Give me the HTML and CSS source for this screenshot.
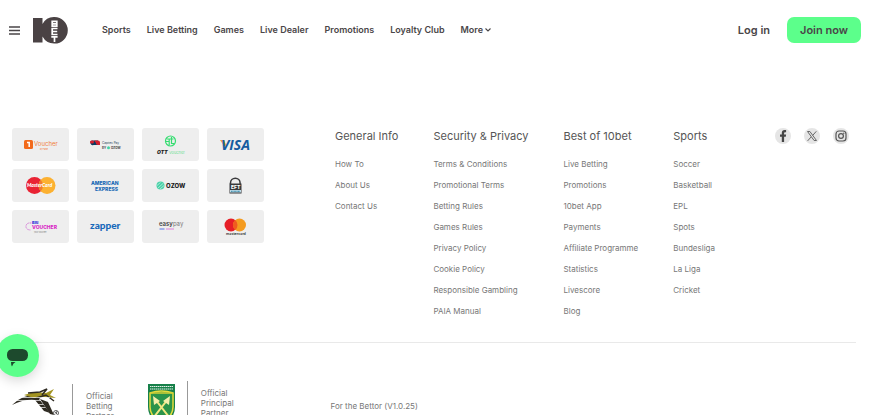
FILE: index.html
```html
<!DOCTYPE html>
<html lang="en">
<head>
    <meta charset="UTF-8">
    <meta name="viewport" content="width=device-width, initial-scale=1.0">
    <title>10bet</title>
    <link rel="stylesheet" href="styles.css">
</head>
<body>
    <header class="header">
        <button class="menu-button" aria-label="Menu">
            <svg width="11" height="9" viewBox="0 0 11 9"><path d="M0 1h11M0 4.500h11M0 8h11" stroke="#4a4648" stroke-width="1.300"/></svg>
        </button>
        <a class="logo" href="#" aria-label="10bet">
            <svg width="35" height="27" viewBox="0 0 35 27">
                <path d="M0 1h9.500v6A13.300 13.300 0 0 1 21.500 0a13.300 13.300 0 0 1 0 26.600A13.300 13.300 0 0 1 9.500 19.600v6H0z" fill="#4a4244"/>
                <g fill="none" stroke="#fff" stroke-width="1.700">
                    <path d="M19.200 4.300h4.600v4.900h-4.600zM19.200 6.800h4.600"/>
                    <path d="M24.500 11.500h-5.300v6h5.300M19.200 14.500h5"/>
                    <path d="M18.300 19.800h6.300M21.500 19.800v5.200"/>
                </g>
            </svg>
        </a>
        <nav class="nav">
            <a href="#">Sports</a>
            <a href="#">Live Betting</a>
            <a href="#">Games</a>
            <a href="#">Live Dealer</a>
            <a href="#">Promotions</a>
            <a href="#">Loyalty Club</a>
            <button class="more-button">More
                <svg width="6" height="4" viewBox="0 0 6 4"><path d="M.5.500 3 3 5.500.500" fill="none" stroke="#4a4648" stroke-width="1.100"/></svg>
            </button>
        </nav>
        <div class="account">
            <button class="login-button">Log in</button>
            <button class="join-button">Join now</button>
        </div>
    </header>

    <footer class="footer">
        <div class="footer-top">
            <div class="payments">
                <div class="payment">
                    <svg viewBox="0 0 57 33">
                        <rect x="12" y="12" width="9" height="9" rx="1.500" fill="#f26a1b"/>
                        <path d="M15 14.500h2.200v4.500" fill="none" stroke="#fff" stroke-width="1.500"/>
                        <text x="22" y="18" font-size="6" fill="#f0803c">Voucher</text>
                        <text x="28" y="22" font-size="2" fill="#f26a1b">by Flash</text>
                    </svg>
                </div>
                <div class="payment">
                    <svg viewBox="0 0 57 33">
                        <path d="M15 12.500h6v4.500h-4.500a2.300 2.300 0 0 1-1.500-4.500z" fill="#0b3c62"/>
                        <path d="M17 12.500h4a2 2 0 0 1 2 2v2.500h-2a2.300 2.300 0 0 1-2.200-2.300z" fill="#d5202f"/>
                        <rect x="13" y="12.500" width="4" height="3" rx="1.500" fill="#d5202f"/>
                        <text x="25" y="16" font-size="3" fill="#233f58">Capitec Pay</text>
                        <text x="25" y="21" font-size="3" font-weight="700" fill="#444">BY</text>
                        <circle cx="31.500" cy="19.800" r="1.500" fill="#43d3a5"/>
                        <text x="34" y="21" font-size="3" font-weight="700" fill="#444">OZOW</text>
                    </svg>
                </div>
                <div class="payment">
                    <svg viewBox="0 0 57 33">
                        <circle cx="28.500" cy="13" r="5" fill="none" stroke="#35dd71" stroke-width="1.200"/>
                        <path d="M25 11h6.500M27.200 11v6M29.500 9v6.500h2.500M24 13.500h3" fill="none" stroke="#35dd71" stroke-width="1.200"/>
                        <text x="15" y="26" font-size="5" font-weight="900" font-style="italic" fill="#222">OTT</text>
                        <text x="27" y="26" font-size="4" fill="#6fe095">Voucher</text>
                    </svg>
                </div>
                <div class="payment">
                    <svg viewBox="0 0 57 33">
                        <path d="M13 12h4l2.500 6-1 2z" fill="#f3a536"/>
                        <text x="14" y="22" font-family="Open Sans" font-size="14" font-weight="700" font-style="italic" fill="#155c9f">VISA</text>
                    </svg>
                </div>
                <div class="payment">
                    <svg viewBox="0 0 57 33">
                        <circle cx="22.500" cy="16.500" r="8.500" fill="#e92334"/>
                        <circle cx="35" cy="16.500" r="8.500" fill="#fcb131"/>
                        <path d="M28.700 10.700a8.500 8.500 0 0 1 0 11.600 8.500 8.500 0 0 1 0-11.600z" fill="#f07b2d"/>
                        <text x="15" y="18" font-family="Lato" font-size="5" font-weight="900" font-style="italic" fill="#fff">MasterCard</text>
                    </svg>
                </div>
                <div class="payment">
                    <svg viewBox="0 0 57 33">
                        <text x="14" y="16" font-size="5" font-weight="800" fill="#1768b5">AMERICAN</text>
                        <text x="18" y="22" font-size="5" font-weight="800" fill="#1768b5">EXPRESS</text>
                    </svg>
                </div>
                <div class="payment">
                    <svg viewBox="0 0 57 33">
                        <circle cx="18.500" cy="16.500" r="4" fill="#49d2a9"/>
                        <path d="M15 16.500l3.500-3M16 19l5.500-5M18 20l4-3.500" stroke="#e3f3ed" stroke-width=".6"/>
                        <text x="24" y="19" font-size="6" font-weight="800" fill="#222">OZOW</text>
                    </svg>
                </div>
                <div class="payment">
                    <svg viewBox="0 0 57 33">
                        <path d="M23.500 15v-1a4.800 4.800 0 0 1 9.600 0v1" fill="none" stroke="#3a3a3c" stroke-width="1.500"/>
                        <rect x="22.500" y="14.500" width="12" height="10" fill="#3a3a3c"/>
                        <text x="24" y="20" font-size="5" font-weight="800" fill="#fff">EFT</text>
                        <path d="M23 21h11v2.500H23z" fill="#bcd9e5"/>
                        <path d="M24 22.300h9" stroke="#3287a8" stroke-dasharray="1 .4"/>
                    </svg>
                </div>
                <div class="payment">
                    <svg viewBox="0 0 57 33">
                        <path d="M21 13h-3a3.500 3.500 0 0 0-4 4q.5 3 5 3" fill="none" stroke="#c540c8" stroke-width=".8" stroke-dasharray="1.200 1"/>
                        <text x="20" y="14" font-size="4" font-weight="900" fill="#3f45db">Blu</text>
                        <text x="20" y="19" font-size="5" font-weight="800" fill="#d92bc6">VOUCHER</text>
                        <text x="22" y="23" font-size="2" fill="#777">your voucher</text>
                    </svg>
                </div>
                <div class="payment">
                    <svg viewBox="0 0 57 33">
                        <text x="13" y="19" font-family="Lato" font-size="10" font-weight="900" fill="#1768ba">zapper</text>
                    </svg>
                </div>
                <div class="payment">
                    <svg viewBox="0 0 57 33">
                        <text x="17" y="16" font-size="6" fill="#777"><tspan font-weight="600" fill="#444">easy</tspan>pay</text>
                        <path d="M17.500 19h5" stroke="#5574e5"/>
                        <path d="M24 19h8" stroke="#dc80d8"/>
                    </svg>
                </div>
                <div class="payment">
                    <svg viewBox="0 0 57 33">
                        <circle cx="24" cy="15" r="6.500" fill="#e61e27"/>
                        <circle cx="32.500" cy="15" r="6.500" fill="#f49b20"/>
                        <path d="M28.200 10a6.500 6.500 0 0 1 0 10 6.500 6.500 0 0 1 0-10z" fill="#f05b20"/>
                        <text x="19" y="25" font-family="Lato" font-size="4" font-weight="700" fill="#333">mastercard</text>
                    </svg>
                </div>
            </div>

            <div class="link-group">
                <h2>General Info</h2>
                <a href="#">How To</a>
                <a href="#">About Us</a>
                <a href="#">Contact Us</a>
            </div>
            <div class="link-group">
                <h2>Security &amp; Privacy</h2>
                <a href="#">Terms &amp; Conditions</a>
                <a href="#">Promotional Terms</a>
                <a href="#">Betting Rules</a>
                <a href="#">Games Rules</a>
                <a href="#">Privacy Policy</a>
                <a href="#">Cookie Policy</a>
                <a href="#">Responsible Gambling</a>
                <a href="#">PAIA Manual</a>
            </div>
            <div class="link-group">
                <h2>Best of 10bet</h2>
                <a href="#">Live Betting</a>
                <a href="#">Promotions</a>
                <a href="#">10bet App</a>
                <a href="#">Payments</a>
                <a href="#">Affiliate Programme</a>
                <a href="#">Statistics</a>
                <a href="#">Livescore</a>
                <a href="#">Blog</a>
            </div>
            <div class="link-group">
                <h2>Sports</h2>
                <a href="#">Soccer</a>
                <a href="#">Basketball</a>
                <a href="#">EPL</a>
                <a href="#">Spots</a>
                <a href="#">Bundesliga</a>
                <a href="#">La Liga</a>
                <a href="#">Cricket</a>
            </div>

            <div class="social">
                <a href="#" aria-label="Facebook">
                    <svg width="16" height="16" viewBox="0 0 16 16"><path d="M6.800 14V8.800H5V6.500h1.800V5c0-1.900 1-2.900 2.800-2.900h1.500v2.200H10c-.6 0-.9.300-.9.900v1.300h2l-.3 2.300H9.100V14z" fill="#454545"/></svg>
                </a>
                <a href="#" aria-label="X">
                    <svg width="16" height="16" viewBox="0 0 16 16"><path d="M3.500 3.500h2.400l6.600 9h-2.400zM12.300 3.300 8.700 7.400M7.200 8.900l-3.600 4" fill="none" stroke="#666" stroke-width="1"/></svg>
                </a>
                <a href="#" aria-label="Instagram">
                    <svg width="16" height="16" viewBox="0 0 16 16"><rect x="3" y="3" width="10" height="10" rx="3" fill="none" stroke="#555" stroke-width="1.200"/><circle cx="8" cy="8" r="2.400" fill="none" stroke="#555" stroke-width="1.200"/><circle cx="10.800" cy="5.200" r=".7" fill="#555"/></svg>
                </a>
            </div>
        </div>

        <div class="footer-bottom">
            <div class="partner">
                <svg class="partner-logo" width="48" height="38" viewBox="0 0 48 38">
                    <path d="M0 18Q12 5 33 8l-6 4 11 14-6-2-9-11Q12 12 0 18z" fill="#2f2b22"/>
                    <path d="M12 8l10-3 12 1 8-4-4 6 6 3-12-1-10 1z" fill="#a39422"/>
                    <path d="M16 6l12-1 7-3-5 6M24 11l10-3 8 6" fill="none" stroke="#2f2b22" stroke-width="1.500"/>
                    <path d="M4 13.500h30M8 10.500h30M18 17.500h20M22 20.500h18" stroke="#fff" stroke-width=".7"/>
                    <path d="M28 12l8 3 6 13-4-1z" fill="#2f2b22"/>
                    <circle cx="44" cy="26" r="2.500" fill="#fff" stroke="#333" stroke-width=".8"/>
                    <path d="M43 25l2 2M45 24l-1 3" stroke="#333" stroke-width=".7"/>
                </svg>
                <p>Official<br>Betting<br>Partner</p>
            </div>
            <div class="partner partner-principal">
                <svg class="partner-logo" width="27" height="42" viewBox="0 0 27 42">
                    <path d="M0 0h27v23q0 12-13.500 18Q0 35 0 23z" fill="#17804a"/>
                    <path d="M2 9q11.500-4 23 0v14q0 10-11.500 15Q2 33 2 23z" fill="#2b944a" stroke="#e4dc3c" stroke-width="1.500"/>
                    <path d="M2 2.500h23M2 5h23" stroke="#e4f1e7" stroke-width="1.100" stroke-dasharray="1.500 .5"/>
                    <path d="M2 9h23" stroke="#d5cf35" stroke-width="1.500"/>
                    <path d="M7 15l14 18M20 15L6 33" stroke="#f1e883" stroke-width="2"/>
                    <path d="M5 12l7 5-6 4zM22 12l-7 5 6 4z" fill="#f5efaa"/>
                </svg>
                <p>Official<br>Principal<br>Partner</p>
            </div>
            <p class="version">For the Bettor (V1.0.25)</p>
        </div>
    </footer>

    <button class="chat-button" aria-label="Chat">
        <svg width="43" height="43" viewBox="0 0 43 43"><rect x="11" y="15" width="21" height="12" rx="5.500" fill="#1d4a2d"/><path d="M15 28h4.500q-2.500 1-3.500 4.500-1-1.500-1-4.500z" fill="#1d4a2d"/></svg>
    </button>
</body>
</html>
```
FILE: styles.css
```css
*{
    box-sizing: border-box;
}
html{
    overflow: hidden;
}
body{
    height: 100vh;
    margin: 0;
    overflow: hidden;
    background-color: #fff;
    color: #4a4648;
    font-family: Inter, "Liberation Sans", sans-serif;
}
a{
    color: inherit;
    text-decoration: none;
}
button{
    padding: 0;
    border: 0;
    background: none;
    color: inherit;
    font-family: inherit;
    cursor: pointer;
}
svg{
    display: block;
}
p{
    margin: 0;
}

/* header */
.header{
    display: flex;
    align-items: center;
    height: 60px;
    padding: 0 19px 0 9px;
}
.logo{
    margin-left: 13px;
}
.nav{
    display: flex;
    gap: 16px;
    margin-left: 34px;
    font-size: 9px;
    font-weight: 600;
    line-height: 12px;
    white-space: nowrap;
}
.more-button{
    display: flex;
    align-items: center;
    gap: 2px;
    font-size: 9px;
    font-weight: 600;
    line-height: 12px;
}
.account{
    display: flex;
    align-items: center;
    gap: 17px;
    margin-left: auto;
}
.login-button,
.join-button{
    font-size: 11px;
    font-weight: 600;
    line-height: 14px;
}
.join-button{
    padding: 6px 13px;
    border-radius: 7px;
    background-color: #5cff8b;
}

/* footer */
.footer-top{
    display: flex;
    align-items: flex-start;
    gap: 35px;
    margin: 68px 24px 0 12px;
    padding-right: 7px;
    padding-bottom: 20px;
    border-bottom: 1px solid #e9e9e9;
}
.payments{
    display: grid;
    grid-template-columns: repeat(4, 57px);
    gap: 8px;
    margin-right: 36px;
}
.payment{
    height: 33px;
    border-radius: 3px;
    background-color: #eee;
}
.link-group{
    display: flex;
    flex-direction: column;
    color: #777;
    font-size: 8px;
    line-height: 21px;
    white-space: nowrap;
}
.link-group h2{
    margin: 0 0 10px;
    color: #555;
    font-size: 11px;
    font-weight: 400;
    line-height: 16px;
}
.social{
    display: flex;
    gap: 13px;
    margin-left: auto;
}
.social a{
    border-radius: 50%;
    background-color: #e5e5e5;
}
.footer-bottom{
    display: flex;
    align-items: flex-start;
    padding: 38px 12px 0;
    color: #777;
    font-size: 8px;
    line-height: 10px;
}
.partner{
    display: flex;
    margin-top: 3px;
}
.partner p{
    margin-left: 12px;
    padding: 7px 0 0 13px;
    border-left: 1px solid #999;
}
.partner-principal{
    margin: 0 0 0 34px;
}
.partner-logo{
    margin-top: 3px;
}
.version{
    margin: 20px 0 0 97px;
}

/* chat */
.chat-button{
    position: fixed;
    bottom: 38px;
    left: -4px;
    border-radius: 50%;
    background-color: #5cff8b;
    box-shadow: 0 4px 12px rgba(0, 0, 0, .15);
}
```
